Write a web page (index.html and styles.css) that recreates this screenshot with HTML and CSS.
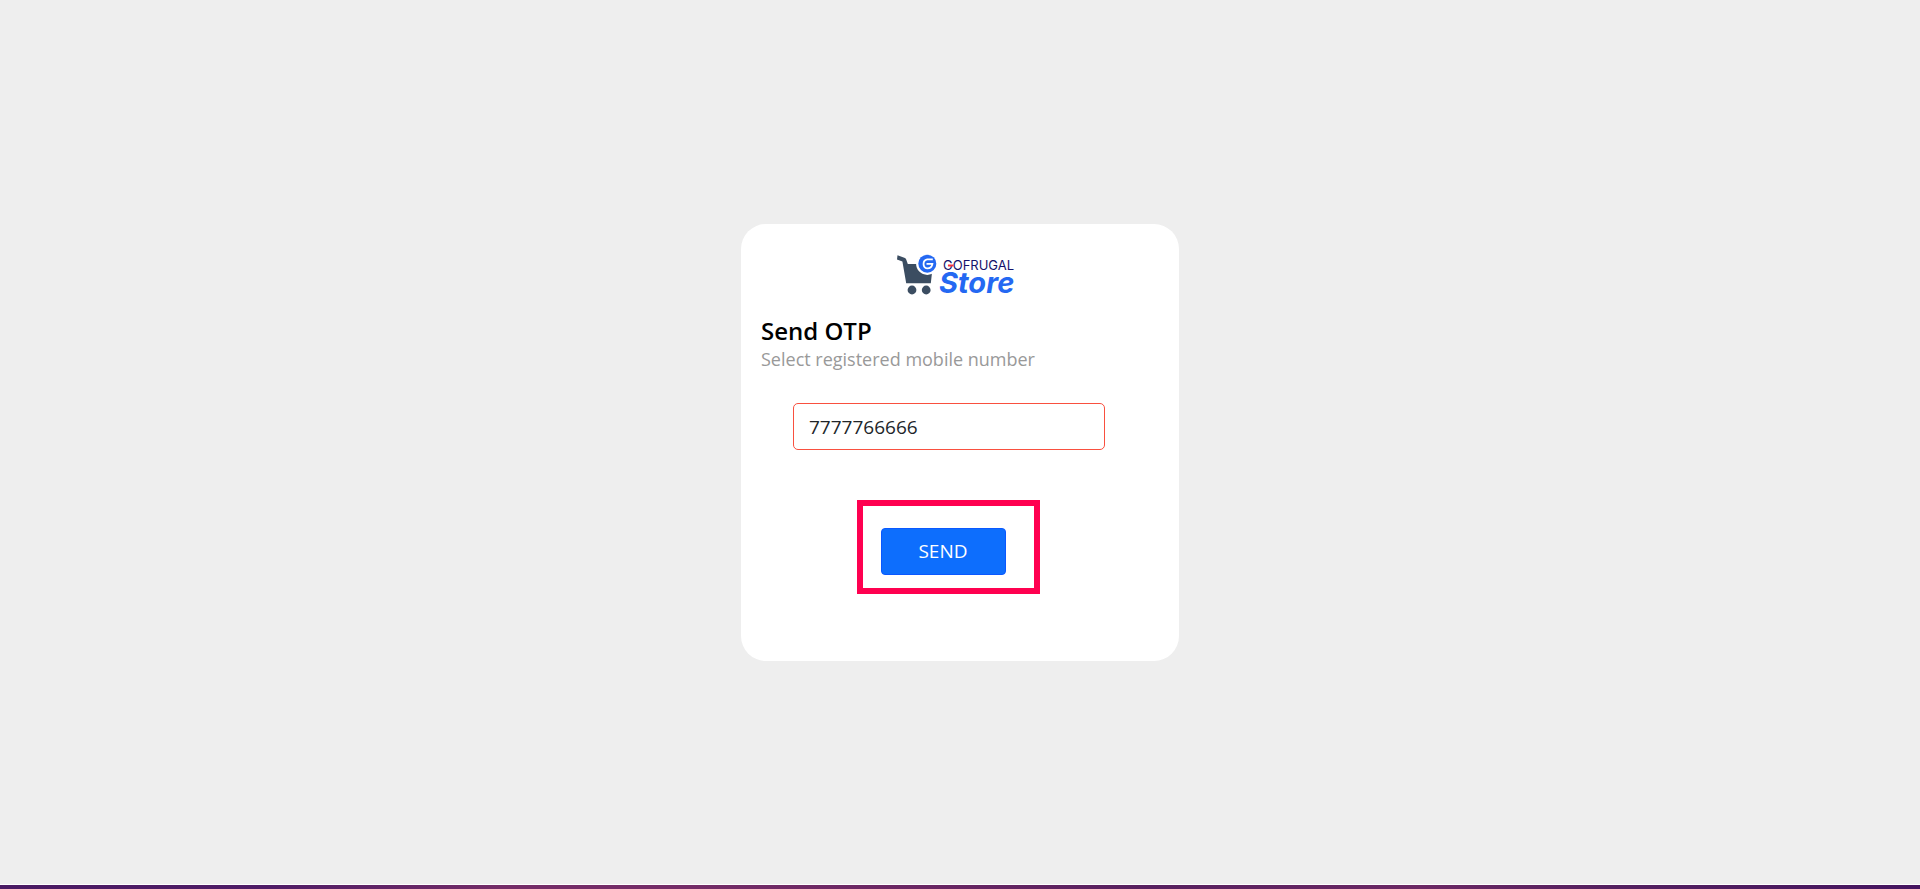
FILE: index.html
```html
<!DOCTYPE html>
<html lang="en">
<head>
    <meta charset="UTF-8">
    <meta name="viewport" content="width=device-width, initial-scale=1.0">
    <title>Send OTP - Gofrugal Store</title>
    <link rel="stylesheet" href="styles.css">
</head>
<body>
    <main class="page">
        <form class="otp-card">
            <svg class="logo" width="128" height="42" viewBox="0 0 128 42" role="img" aria-label="Gofrugal Store">
                <!-- Cart -->
                <path class="logo-cart" d="M1.5 0.3L9 3Q10 3.5 10.3 4.8L11.8 9H37L34.8 28.3H10.2L6.4 6.5L1 4.5Z"/>
                <circle class="logo-cart" cx="16" cy="35" r="4.4"/>
                <circle class="logo-cart" cx="30.2" cy="35" r="4.4"/>
                <!-- Badge -->
                <circle cx="31.3" cy="8.7" r="11.2" fill="#fff"/>
                <circle cx="31.3" cy="8.7" r="9" fill="#2468f2"/>
                <path d="M36.8 4.4H31.2A4.6 4.6 0 0 0 31.2 13.4Q35.8 13.4 36.4 8.9H30.5" fill="none" stroke="#fff" stroke-width="1.8"/>
                <!-- Name -->
                <text class="logo-name" x="47" y="15">GOFRUGAL</text>
                <path d="M52 10.5H57.5" stroke="#f5333f" stroke-width="2"/>
                <text class="logo-store" x="43" y="38">Store</text>
            </svg>

            <h1 class="title">Send OTP</h1>
            <label class="subtitle" for="mobile">Select registered mobile number</label>

            <input class="mobile-input" type="tel" id="mobile" name="mobile" value="7777766666">

            <div class="send-highlight">
                <button class="send-btn" type="submit">SEND</button>
            </div>
        </form>
    </main>
    <footer class="bottom-bar"></footer>
</body>
</html>
```

FILE: styles.css
```css
* {
    box-sizing: border-box;
}

body {
    margin: 0;
    min-height: 100vh;
    display: flex;
    flex-direction: column;
    background-color: #eeeeee;
    font-family: "Segoe UI", "Open Sans", "Noto Sans", sans-serif;
}

.page {
    flex: 1;
    display: flex;
    align-items: center;
    justify-content: center;
    border-bottom: 1px solid #ffffff;
}

.otp-card {
    width: 100%;
    max-width: 438px;
    padding: 31px 20px 67px;
    display: flex;
    flex-direction: column;
    background-color: #ffffff;
    border-radius: 25px;
}

/* Logo */
.logo {
    align-self: center;
    overflow: visible;
}

.logo-cart {
    fill: #3b4d61;
}

.logo-name {
    font-family: Inter, sans-serif;
    font-size: 13px;
    fill: #14126b;
}

.logo-store {
    font-family: Inter, sans-serif;
    font-size: 29px;
    font-weight: 700;
    font-style: italic;
    fill: #2468f2;
}

/* Heading */
.title {
    margin: 20px 0 0;
    font-size: 24px;
    font-weight: 600;
    line-height: 28px;
    color: #000000;
}

.subtitle {
    font-size: 18px;
    line-height: 28px;
    color: #999999;
}

/* Form controls */
.mobile-input {
    height: 47px;
    margin: 30px 54px 0 32px;
    padding: 2px 15px 0;
    border: 1px solid #f9503f;
    border-radius: 5px;
    background-color: #ffffff;
    font-family: inherit;
    font-size: 19px;
    color: #212529;
}

.send-highlight {
    align-self: center;
    margin: 50px 24px 0 0;
    padding: 22px 28px 13px 18px;
    border: 6px solid #ff0050;
}

.send-btn {
    display: block;
    width: 125px;
    height: 47px;
    border: 1px solid #0a58ff;
    border-radius: 4px;
    background-color: #0d6efd;
    font-family: inherit;
    font-size: 19px;
    color: #ffffff;
    cursor: pointer;
}

.bottom-bar {
    height: 4px;
    background: linear-gradient(to right, #4a1a63 0%, #4f1c66 14%, #742c67 26%, #742c67 36%, #6a2663 48%, #57205f 60%, #6c2864 74%, #54205f 84%, #451560 100%);
}
```
